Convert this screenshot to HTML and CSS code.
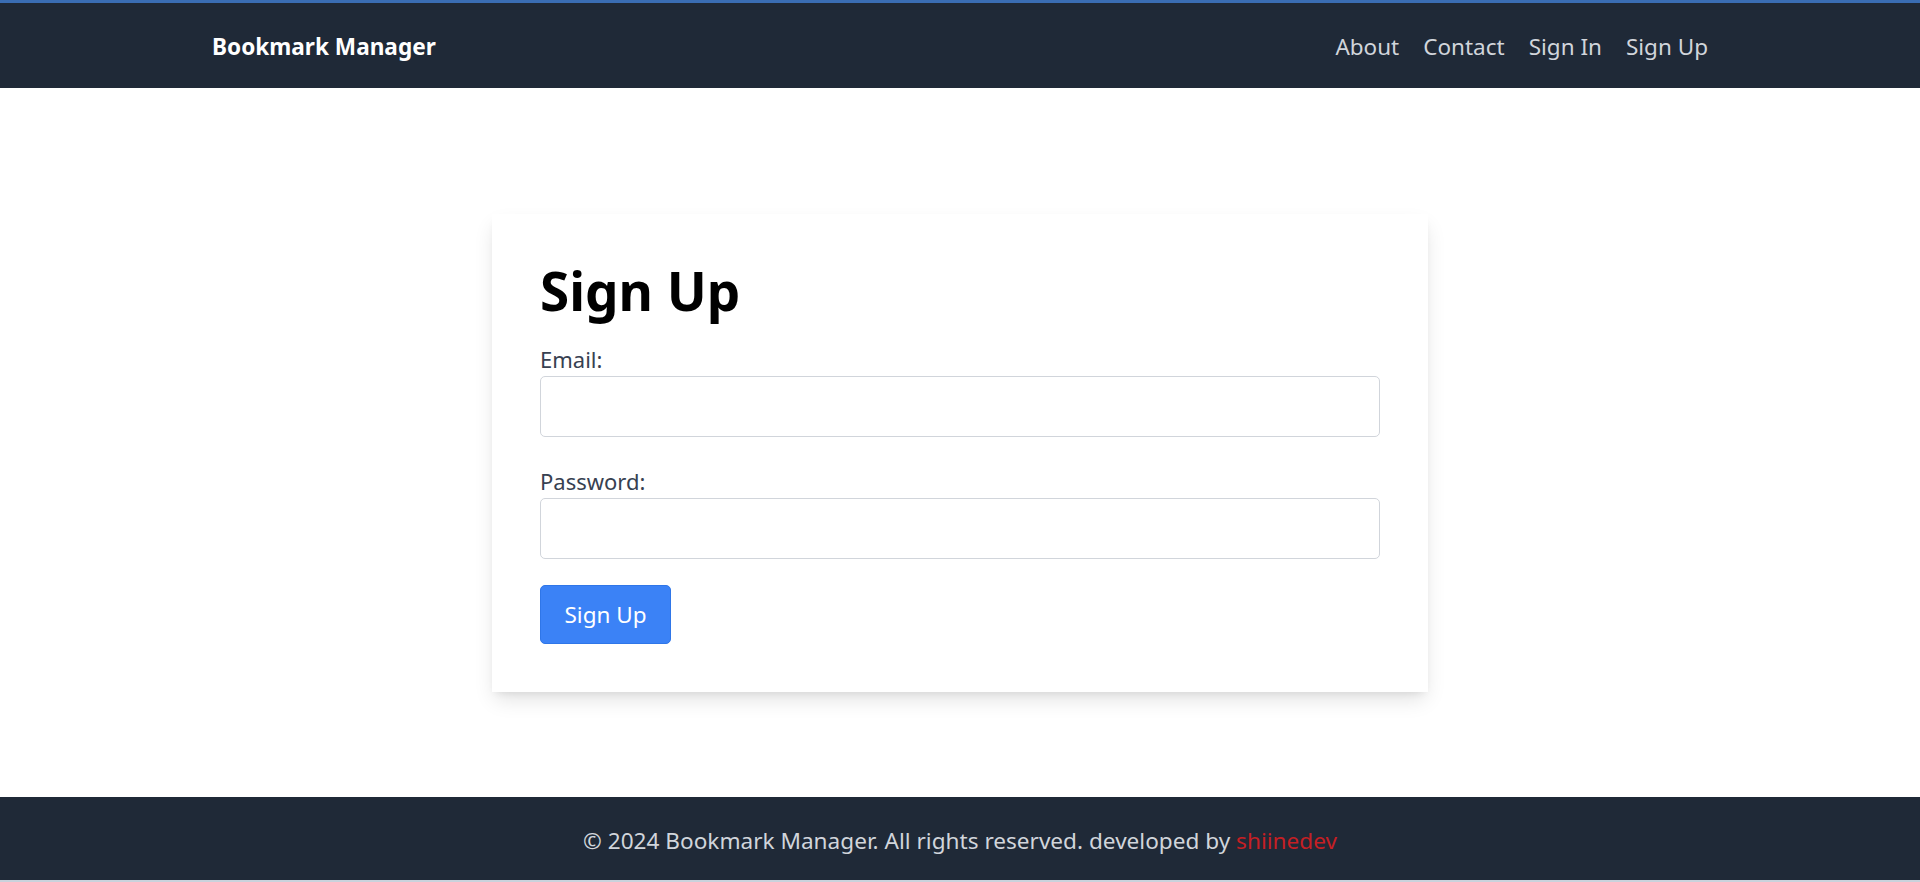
FILE: index.html
```html
<!DOCTYPE html>
<html lang="en">
<head>
<meta charset="utf-8">
<title>Bookmark Manager - Sign Up</title>
<link rel="stylesheet" href="styles.css">
</head>
<body>
<div class="page">
  <header class="navbar">
    <div class="container nav-inner">
      <a class="brand" href="#">Bookmark Manager</a>
      <nav class="nav-links">
        <a href="#">About</a>
        <a href="#">Contact</a>
        <a href="#">Sign In</a>
        <a href="#">Sign Up</a>
      </nav>
    </div>
  </header>
  <main class="main">
    <div class="card">
      <h1 class="title">Sign Up</h1>
      <form class="form">
        <div class="field">
          <label for="email">Email:</label>
          <input id="email" type="email">
        </div>
        <div class="field">
          <label for="password">Password:</label>
          <input id="password" type="password">
        </div>
        <button type="button" class="btn">Sign Up</button>
      </form>
    </div>
  </main>
  <footer class="footer">
    <p>© 2024 Bookmark Manager. All rights reserved. developed by <a href="#">shiinedev</a></p>
  </footer>
</div>
</body>
</html>
```
FILE: styles.css
```css
* { box-sizing: border-box; }
html, body { margin: 0; padding: 0; }
body {
  font-family: "Noto Sans", "Open Sans", sans-serif;
  background: #ffffff;
  color: #111827;
}
.page {
  min-height: 100vh;
  display: flex;
  flex-direction: column;
}
.navbar {
  background: #1f2937;
  border-top: 3px solid #3a6db3;
  height: 88px;
}
.container {
  max-width: 1536px;
  margin: 0 auto;
  padding: 0 16px;
}
.nav-inner {
  height: 100%;
  display: flex;
  align-items: center;
  justify-content: space-between;
  padding: 2px 20px 0;
}
.brand {
  color: #ffffff;
  font-weight: 700;
  font-size: 22.6px;
  text-decoration: none;
}
.nav-links {
  display: flex;
  gap: 24px;
}
.nav-links a {
  color: #d1d5db;
  font-size: 22.5px;
  text-decoration: none;
}
.main {
  flex: 1;
  display: flex;
  justify-content: center;
  align-items: flex-start;
  padding-top: 126px;
}
.card {
  width: 936px;
  background: #ffffff;
  padding: 48px;
  box-shadow: 0 10px 20px -3px rgba(0,0,0,0.12), 0 4px 8px -4px rgba(0,0,0,0.1);
}
.title {
  margin: 0 0 23px;
  font-size: 53px;
  font-weight: 700;
  line-height: 58px;
  color: #000000;
}
.form {
  display: flex;
  flex-direction: column;
}
.field {
  display: flex;
  flex-direction: column;
  margin-bottom: 28px;
}
.field:last-of-type {
  margin-bottom: 26px;
}
.field label {
  font-size: 22px;
  color: #374151;
  line-height: 33px;
}
.field input {
  height: 61px;
  border: 1px solid #d1d5db;
  border-radius: 5px;
  font-size: 20px;
  padding: 0 14px;
  outline: none;
}
.btn {
  align-self: flex-start;
  width: 131px;
  height: 59px;
  background: #3b82f6;
  color: #ffffff;
  border: 1px solid #2f76e8;
  border-radius: 5px;
  font-family: inherit;
  font-size: 22.5px;
}
.footer {
  background: #1f2937;
  height: 85px;
  display: flex;
  align-items: center;
  justify-content: center;
  padding-top: 4px;
  border-bottom: 2px solid #c9d2dc;
}
.footer p {
  margin: 0;
  color: #d1d5db;
  font-size: 22.6px;
}
.footer a {
  color: #c51f24;
  text-decoration: none;
}
```
